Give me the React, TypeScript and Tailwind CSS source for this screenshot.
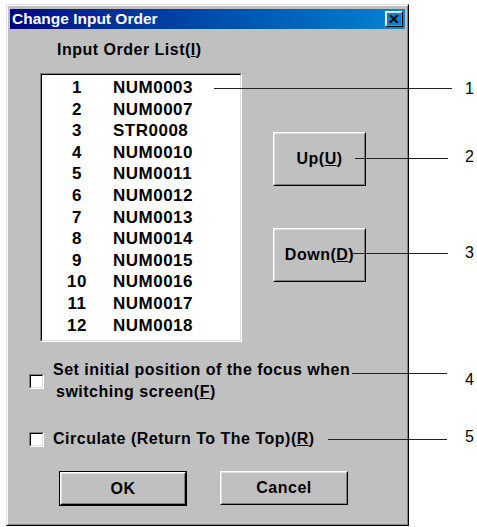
import React from "react";

const items = [
  "NUM0003",
  "NUM0007",
  "STR0008",
  "NUM0010",
  "NUM0011",
  "NUM0012",
  "NUM0013",
  "NUM0014",
  "NUM0015",
  "NUM0016",
  "NUM0017",
  "NUM0018",
];

// callouts drawn over the dialog: [lineFrom, lineTo, lineY, numberY, label]
const callouts: [number, number, number, number, string][] = [
  [214, 452, 88, 89, "1"],
  [355, 448, 158, 157, "2"],
  [353, 448, 253, 253, "3"],
  [352, 447, 373, 380, "4"],
  [328, 447, 439, 437, "5"],
];

function RaisedButton({
  children,
  isDefault,
  className,
}: {
  children: React.ReactNode;
  isDefault?: boolean;
  className: string;
}) {
  const inner = (
    <div className="h-full w-full border border-t-white border-l-white border-r-black border-b-black">
      <div className="h-full w-full border border-t-[#dfdfdf] border-l-[#dfdfdf] border-r-[#808080] border-b-[#808080] flex items-center justify-center">
        {children}
      </div>
    </div>
  );
  if (isDefault) {
    return <div className={`border border-black ${className}`}>{inner}</div>;
  }
  return <div className={className}>{inner}</div>;
}

function Checkbox() {
  return (
    <div className="w-[15px] h-[15px] shrink-0 border border-t-[#808080] border-l-[#808080] border-r-white border-b-white">
      <div className="w-full h-full bg-white border border-t-black border-l-black border-r-[#dfdfdf] border-b-[#dfdfdf]"></div>
    </div>
  );
}

export default function App() {
  return (
    <div
      className="relative w-[477px] h-[527px] bg-white overflow-hidden text-black"
      style={{ fontFamily: '"Liberation Sans", Arial, sans-serif' }}
    >
      {/* Dialog window */}
      <div className="ml-[6px] mt-[4px] w-[403px] h-[522px] border border-t-[#dfdfdf] border-l-[#dfdfdf] border-r-black border-b-black">
        <div className="h-full w-full bg-[#c0c0c0] border border-t-white border-l-white border-r-[#808080] border-b-[#808080] px-[2px] pt-[3px] pb-[2px] flex flex-col">
          {/* Title bar */}
          <div className="h-[20px] flex items-center justify-between bg-gradient-to-r from-[#000080] to-[#1084d0] pl-[2px] pr-[2px]">
            <span className="text-white font-bold text-[15.5px] leading-none">Change Input Order</span>
            <RaisedButton className="w-[18px] h-[16px]">
              <span className="text-[14px] font-bold leading-none">✕</span>
            </RaisedButton>
          </div>

          {/* Body */}
          <div className="flex flex-col pl-[19px] font-bold text-[16px] tracking-[0.5px]">
            <div className="flex">
              {/* List column */}
              <div className="flex flex-col ml-[11px]">
                <div className="ml-[17px] mt-[12px] h-[18px] leading-[18px]">
                  Input Order List(<u>I</u>)
                </div>
                <div className="mt-[14px] w-[202px] h-[269px] border border-t-[#808080] border-l-[#808080] border-r-white border-b-white">
                  <div className="w-full h-full bg-white border border-t-black border-l-black border-r-[#dfdfdf] border-b-[#dfdfdf] pt-[2px] pl-[15px]">
                    {items.map((name, i) => (
                      <div key={name} className="flex items-center h-[21.6px] text-[17px]">
                        <span className="w-[40px] text-center">{i + 1}</span>
                        <span className="ml-[16px]">{name}</span>
                      </div>
                    ))}
                  </div>
                </div>
              </div>

              {/* Move buttons */}
              <div className="flex flex-col ml-[31px] mt-[103px] gap-[42px]">
                <RaisedButton className="w-[93px] h-[54px]">
                  <span>
                    Up(<u>U</u>)
                  </span>
                </RaisedButton>
                <RaisedButton className="w-[93px] h-[54px]">
                  <span>
                    Down(<u>D</u>)
                  </span>
                </RaisedButton>
              </div>
            </div>

            {/* Options */}
            <div className="flex items-center mt-[17px] gap-[9px]">
              <Checkbox />
              <div className="leading-[22px]">
                <div>Set initial position of the focus when</div>
                <div className="ml-[3px]">
                  switching screen(<u>F</u>)
                </div>
              </div>
            </div>
            <div className="flex items-center mt-[25px] gap-[9px]">
              <Checkbox />
              <div className="leading-[22px]">
                Circulate (Return To The Top)(<u>R</u>)
              </div>
            </div>

            {/* Dialog buttons */}
            <div className="flex mt-[21px] ml-[30px] gap-[33px]">
              <RaisedButton isDefault className="w-[128px] h-[35px]">
                <span>OK</span>
              </RaisedButton>
              <RaisedButton className="w-[128px] h-[34px]">
                <span>Cancel</span>
              </RaisedButton>
            </div>
          </div>
        </div>
      </div>

      {/* Callouts */}
      {callouts.map(([x1, x2, ly, ny, label]) => (
        <React.Fragment key={label}>
          <div
            className="absolute h-px bg-[#222]"
            style={{ left: x1, width: x2 - x1, top: ly }}
          ></div>
          <div
            className="absolute text-[16px] leading-none"
            style={{ left: 465, top: ny - 8 }}
          >
            {label}
          </div>
        </React.Fragment>
      ))}
    </div>
  );
}
